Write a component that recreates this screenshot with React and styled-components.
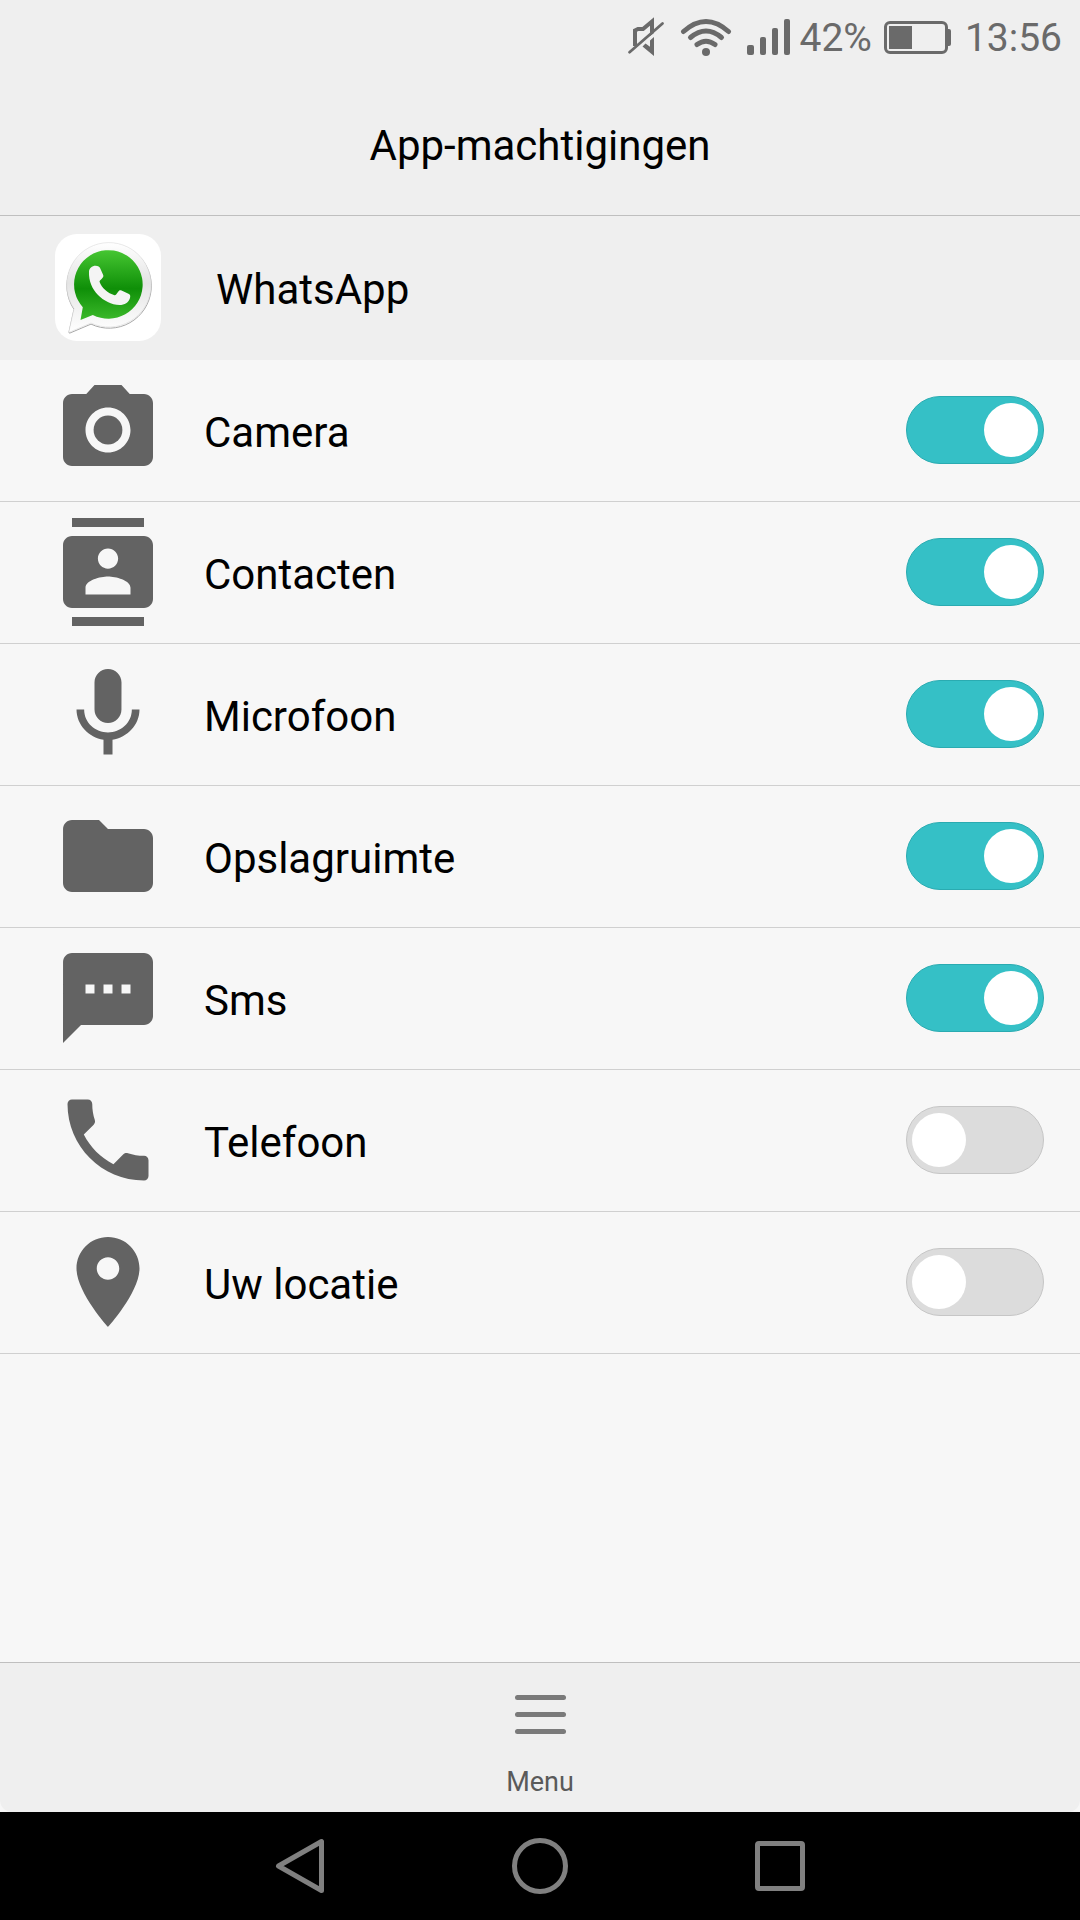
import React, { useState } from 'react';
import styled, { createGlobalStyle } from 'styled-components';

const GlobalStyle = createGlobalStyle`
  * {
    box-sizing: border-box;
  }

  body {
    margin: 0;
    background: #f7f7f7;
    font-family: Roboto, sans-serif;
    color: #000;
  }
`;

const Screen = styled.div`
  display: flex;
  flex-direction: column;
  width: 1080px;
  height: 1920px;
  background: #f7f7f7;
`;

const Header = styled.header`
  height: 216px;
  background: #efefef;
  border-bottom: 1px solid #bfbfbf;
`;

const StatusBar = styled.div`
  display: flex;
  justify-content: flex-end;
  align-items: center;
  height: 74px;
  padding-right: 18px;
  color: #6a6a6a;

  svg {
    display: block;
  }
`;

const StatusText = styled.span`
  font-size: 39px;
  line-height: 46px;
  margin-top: 2px;
  margin-left: ${({ $gap }) => $gap}px;
`;

const Title = styled.h1`
  margin: 0;
  font-size: 42px;
  font-weight: 400;
  line-height: 50px;
  padding-top: 47px;
  text-align: center;
`;

const AppRow = styled.section`
  display: flex;
  align-items: center;
  height: 144px;
  padding-left: 55px;
  background: #efefef;
`;

const AppLogo = styled.svg`
  width: 106px;
  height: 107px;
  margin-bottom: 1px;
`;

const AppName = styled.span`
  margin: 3px 0 0 55px;
  font-size: 42px;
  line-height: 50px;
`;

const PermissionList = styled.ul`
  flex: 1;
  margin: 0;
  padding: 0;
  list-style: none;
`;

const PermissionRow = styled.li`
  display: flex;
  align-items: center;
  height: 142px;
  padding: 0 36px 1px 54px;
  border-bottom: 1px solid #d0d0d0;
`;

const PermissionIcon = styled.svg`
  width: 108px;
  height: 108px;
  fill: #636363;
`;

const PermissionName = styled.span`
  flex: 1;
  margin: 5px 0 0 42px;
  font-size: 42px;
  line-height: 50px;
`;

const Switch = styled.button`
  display: flex;
  align-items: center;
  justify-content: ${({ $on }) => ($on ? 'flex-end' : 'flex-start')};
  width: 138px;
  height: 68px;
  padding: 0 5px;
  border: 1px solid ${({ $on }) => ($on ? '#2aabb1' : '#c6c6c6')};
  border-radius: 34px;
  background: ${({ $on }) => ($on ? '#35c0c6' : '#dcdcdc')};
`;

const Knob = styled.span`
  width: 54px;
  height: 54px;
  border-radius: 50%;
  background: #fff;
`;

const MenuBar = styled.footer`
  display: flex;
  flex-direction: column;
  align-items: center;
  height: 150px;
  padding-top: 32px;
  background: #efefef;
  border-top: 1px solid #bfbfbf;
  border-radius: 0 0 12px 12px;
`;

const MenuLines = styled.div`
  display: flex;
  flex-direction: column;
  gap: 12px;
`;

const MenuLine = styled.span`
  width: 51px;
  height: 5px;
  border-radius: 3px;
  background: #7a7a7a;
`;

const MenuLabel = styled.span`
  margin-top: 32px;
  font-size: 27px;
  line-height: 32px;
  color: #5a5a5a;
`;

const NavBar = styled.nav`
  display: flex;
  justify-content: center;
  align-items: center;
  gap: 180px;
  height: 108px;
  background: #000;

  svg {
    width: 60px;
    height: 60px;
    fill: none;
    stroke: #808080;
    stroke-width: 5;
    stroke-linejoin: round;
  }
`;

const permissions = [
  {
    name: 'Camera',
    on: true,
    icon: (
      <>
        <circle cx="12" cy="12" r="3.2" />
        <path d="M9 2L7.17 4H4c-1.1 0-2 .9-2 2v12c0 1.1.9 2 2 2h16c1.1 0 2-.9 2-2V6c0-1.1-.9-2-2-2h-3.17L15 2H9zm3 15c-2.76 0-5-2.24-5-5s2.24-5 5-5 5 2.24 5 5-2.24 5-5 5z" />
      </>
    ),
  },
  {
    name: 'Contacten',
    on: true,
    icon: (
      <path d="M20 0H4v2h16V0zM4 24h16v-2H4v2zM20 4H4c-1.1 0-2 .9-2 2v12c0 1.1.9 2 2 2h16c1.1 0 2-.9 2-2V6c0-1.1-.9-2-2-2zm-8 2.75c1.24 0 2.25 1.01 2.25 2.25s-1.01 2.25-2.25 2.25S9.75 10.24 9.75 9 10.76 6.75 12 6.75zM17 17H7v-1.5c0-1.67 3.33-2.5 5-2.5s5 .83 5 2.5V17z" />
    ),
  },
  {
    name: 'Microfoon',
    on: true,
    icon: (
      <path d="M12 14c1.66 0 2.99-1.34 2.99-3L15 5c0-1.66-1.34-3-3-3S9 3.34 9 5v6c0 1.66 1.34 3 3 3zm5.3-3c0 3-2.54 5.1-5.3 5.1S6.7 14 6.7 11H5c0 3.41 2.72 6.23 6 6.72V21h2v-3.28c3.28-.48 6-3.3 6-6.72h-1.7z" />
    ),
  },
  {
    name: 'Opslagruimte',
    on: true,
    icon: (
      <path d="M10 4H4c-1.1 0-1.99.9-1.99 2L2 18c0 1.1.9 2 2 2h16c1.1 0 2-.9 2-2V8c0-1.1-.9-2-2-2h-8l-2-2z" />
    ),
  },
  {
    name: 'Sms',
    on: true,
    icon: (
      <path d="M20 2H4c-1.1 0-1.99.9-1.99 2L2 22l4-4h14c1.1 0 2-.9 2-2V4c0-1.1-.9-2-2-2zM9 11H7V9h2v2zm4 0h-2V9h2v2zm4 0h-2V9h2v2z" />
    ),
  },
  {
    name: 'Telefoon',
    on: false,
    icon: (
      <path d="M6.62 10.79c1.44 2.83 3.76 5.14 6.59 6.59l2.2-2.2c.27-.27.67-.36 1.02-.24 1.12.37 2.33.57 3.57.57.55 0 1 .45 1 1V20c0 .55-.45 1-1 1-9.39 0-17-7.61-17-17 0-.55.45-1 1-1h3.5c.55 0 1 .45 1 1 0 1.25.2 2.45.57 3.57.11.35.03.74-.25 1.02l-2.2 2.2z" />
    ),
  },
  {
    name: 'Uw locatie',
    on: false,
    icon: (
      <path d="M12 2C8.13 2 5 5.13 5 9c0 5.25 7 13 7 13s7-7.75 7-13c0-3.87-3.13-7-7-7zm0 9.5c-1.38 0-2.5-1.12-2.5-2.5s1.12-2.5 2.5-2.5 2.5 1.12 2.5 2.5-1.12 2.5-2.5 2.5z" />
    ),
  },
];

// mute, wifi and signal share one strip so their spacing stays fixed
const StatusIcons = () => (
  <svg width="164" height="44" viewBox="626 14 164 44" fill="none" stroke="currentColor">
    <path d="M635 45V29.5L638 28H643L652 20.5V31" strokeWidth="4" />
    <path d="M654 17v15l-4 3V21z" fill="currentColor" stroke="none" />
    <path d="M654 36v19l-11.500-9.500 3-3 4.500 3.300V39.500z" fill="currentColor" stroke="none" />
    <path d="M629.500 51.200L662.500 22.500" strokeWidth="2.800" strokeLinecap="round" />
    <path d="M683.500 30.500Q706 10.500 728.500 30.500" strokeWidth="5" strokeLinecap="round" />
    <path d="M690.500 36.500Q706 23.500 721.500 36.500" strokeWidth="5" strokeLinecap="round" />
    <path d="M697 43.500Q706 37 715 43.500" strokeWidth="5" strokeLinecap="round" />
    <circle cx="706" cy="51" r="4" fill="currentColor" stroke="none" />
    <g fill="currentColor" stroke="none">
      <rect x="747" y="44" width="7" height="10" rx="2" />
      <rect x="760" y="36" width="6" height="18" rx="2" />
      <rect x="772" y="27" width="6" height="27" rx="2" />
      <rect x="784" y="18" width="6" height="36" rx="2" />
    </g>
  </svg>
);

const Battery = () => (
  <svg width="80" height="44" viewBox="872 15 80 44">
    <rect x="885.5" y="22.500" width="61" height="30" rx="4.500" fill="none" stroke="currentColor" strokeWidth="3" />
    <rect x="889" y="26" width="23" height="23" fill="currentColor" />
    <path d="M947 29h2q2 0 2 2v13q0 2-2 2h-2z" fill="currentColor" />
  </svg>
);

const WhatsAppIcon = () => (
  <AppLogo viewBox="0 0 106 107">
    <defs>
      <linearGradient id="rim" x1="0" y1="0" x2="0" y2="1">
        <stop offset="0" stopColor="#ffffff" />
        <stop offset="0.45" stopColor="#e4e4e4" />
        <stop offset="1" stopColor="#ffffff" />
      </linearGradient>
      <linearGradient id="bubble" x1="0" y1="0" x2="0" y2="1">
        <stop offset="0" stopColor="#46c632" />
        <stop offset="0.55" stopColor="#0f8f08" />
        <stop offset="1" stopColor="#3bb92a" />
      </linearGradient>
    </defs>
    <rect width="106" height="107" rx="22" fill="#fff" />
    <path
      d="M19.700 75.800A42.200 42.200 0 1 1 36.700 90.500L15.500 99.500Q14.500 99.500 14.700 98.500Z"
      fill="none"
      stroke="#a8a8a8"
      strokeWidth="1"
      transform="translate(-.7 -.4)"
    />
    <path
      d="M19.700 75.300A42.200 42.200 0 1 1 36.700 89.800L15.500 98.800Q14.500 99 14.700 98Z"
      fill="url(#rim)"
      stroke="#d4d4d4"
      strokeWidth="0.5"
      transform="translate(-.7 -.8)"
    />
    <path
      d="M27.300 73.300A34.300 34.300 0 1 1 37.300 81L25 86Z"
      fill="url(#bubble)"
      transform="translate(.5 0)"
    />
    <path
      d="M34 37.500C34.200 34.300 37 31.800 40.500 31.800C43.400 31.800 44.400 32.600 45.300 34.600L48.200 41C48.700 42.300 48 43.500 46.800 44.700C45.300 46.200 44.300 47 44.600 48C46.500 53.500 53 59.500 59.500 61.200C60.800 61.400 61.700 59.600 63.200 57.700C64.200 56.400 65 56 66.500 56.400L74 60C75.300 60.800 75.500 62 75 64C73.800 68.500 69.500 71 64.500 71C56.500 71 48.500 66.500 43 61C37.500 55.500 33.500 47 34 37.500Z"
      fill="#f4f4f4"
    />
  </AppLogo>
);

const Permission = ({ name, icon, on }) => {
  const [enabled, setEnabled] = useState(on);

  return (
    <PermissionRow>
      <PermissionIcon viewBox="0 0 24 24">{icon}</PermissionIcon>
      <PermissionName>{name}</PermissionName>
      <Switch $on={enabled} onClick={() => setEnabled(!enabled)}>
        <Knob />
      </Switch>
    </PermissionRow>
  );
};

const App = () => (
  <>
    <GlobalStyle />
    <Screen>
      <Header>
        <StatusBar>
          <StatusIcons />
          <StatusText $gap={9}>42%</StatusText>
          <Battery />
          <StatusText $gap={13}>13:56</StatusText>
        </StatusBar>
        <Title>App-machtigingen</Title>
      </Header>
      <AppRow>
        <WhatsAppIcon />
        <AppName>WhatsApp</AppName>
      </AppRow>
      <PermissionList>
        {permissions.map((permission) => (
          <Permission key={permission.name} {...permission} />
        ))}
      </PermissionList>
      <MenuBar>
        <MenuLines>
          <MenuLine />
          <MenuLine />
          <MenuLine />
        </MenuLines>
        <MenuLabel>Menu</MenuLabel>
      </MenuBar>
      <NavBar>
        <svg viewBox="270 1836 60 60">
          <path d="M321.500 1841.500V1890.500L278.500 1866Z" />
        </svg>
        <svg viewBox="510 1836 60 60">
          <circle cx="540" cy="1866" r="25.500" />
        </svg>
        <svg viewBox="750 1836 60 60">
          <rect x="757.500" y="1843.500" width="45" height="45" rx="1.500" />
        </svg>
      </NavBar>
    </Screen>
  </>
);

export default App;
